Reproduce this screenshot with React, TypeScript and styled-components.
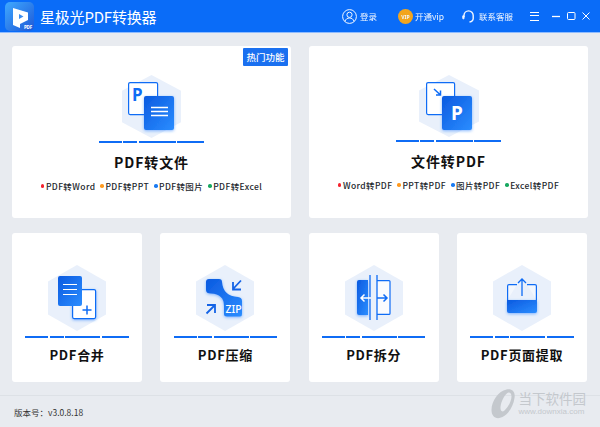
import React from 'react';
import styled, { createGlobalStyle } from 'styled-components';

const GlobalStyle = createGlobalStyle`
  html, body {
    margin: 0;
    padding: 0;
  }
  body {
    font-family: "Noto Sans CJK SC", "Noto Sans", sans-serif;
    background: #e8ebf0;
  }
`;

const HEX = '#e9f0fb';
const BLUE = '#0f6cf5';

const Hexagon = ({ w, h, children }: { w: number; h: number; children: React.ReactNode }) => (
  <svg width={w} height={h} viewBox={`0 0 ${w} ${h}`}>
    <defs>
      <linearGradient id="docFill" x1="0" y1="0" x2="1" y2="1">
        <stop offset="0" stopColor="#0b5ae0" />
        <stop offset="1" stopColor="#2b8dff" />
      </linearGradient>
      <filter id="glow" x="-30%" y="-30%" width="160%" height="160%">
        <feDropShadow dx="0" dy="1" stdDeviation="1.5" floodColor="#2b7fff" floodOpacity="0.55" />
      </filter>
    </defs>
    <polygon points={`${w / 2},0 ${w},${h / 4} ${w},${(h * 3) / 4} ${w / 2},${h} 0,${(h * 3) / 4} 0,${h / 4}`} fill={HEX} />
    {children}
  </svg>
);

const PdfToFileIcon = () => (
  <Hexagon w={59} h={63}>
    <rect x="6.6" y="7.6" width="29" height="32" rx="1.5" fill="#fff" stroke={BLUE} strokeWidth="1.2" />
    <text x="10" y="26" fontSize="17" fontWeight="700" fill={BLUE} fontFamily="Noto Sans">P</text>
    <rect x="22" y="21" width="30" height="34" rx="2" fill="url(#docFill)" filter="url(#glow)" />
    <path d="M29 32.5H46M29 36.5H46M29 40.5H46" stroke="#fff" strokeWidth="1.4" />
  </Hexagon>
);

const FileToPdfIcon = () => (
  <Hexagon w={60} h={62}>
    <rect x="7.6" y="7.6" width="28" height="32" rx="1.5" fill="#fff" stroke={BLUE} strokeWidth="1.2" />
    <path d="M15 14L21.5 20M21.5 15.5V20H17" fill="none" stroke={BLUE} strokeWidth="1.5" />
    <rect x="23" y="21" width="30" height="34" rx="2" fill="url(#docFill)" filter="url(#glow)" />
    <text x="38" y="45" textAnchor="middle" fontSize="19" fontWeight="700" fill="#fff" fontFamily="Noto Sans">P</text>
  </Hexagon>
);

const MergeIcon = () => (
  <Hexagon w={58} h={66}>
    <rect x="24.6" y="24.6" width="23" height="29" rx="1.5" fill="#fff" stroke={BLUE} strokeWidth="1.2" filter="url(#glow)" />
    <rect x="10" y="11" width="24" height="30" rx="2" fill="url(#docFill)" />
    <path d="M15 19.5H29M15 24.5H29M15 29.5H29" stroke="#fff" strokeWidth="1.2" />
    <path d="M39 40.5V49.5M34.5 45H43.5" stroke={BLUE} strokeWidth="1.5" />
  </Hexagon>
);

const CompressIcon = () => (
  <Hexagon w={58} h={66}>
    <path
      d="M13 14H23Q26 14 26 17Q27 31 42 32Q46 32.5 46 36V49Q46 51.5 44 51.5H31Q28 51.5 28 49V41Q28 29 15 28.5Q10 28.5 10 25V17Q10 14 13 14Z"
      fill="url(#docFill)"
      filter="url(#glow)"
    />
    <text x="37.5" y="48" textAnchor="middle" fontSize="10.5" fontWeight="500" fill="#fff" fontFamily="Noto Sans">ZIP</text>
    <path d="M45 15.5L37 24M37 17V24.5H45" fill="none" stroke="#1463e6" strokeWidth="1.8" />
    <path d="M10.5 48.5L18.5 40.5M11 40H19V48" fill="none" stroke="#1463e6" strokeWidth="1.8" />
  </Hexagon>
);

const SplitIcon = () => (
  <Hexagon w={58} h={66}>
    <path d="M14 15H23V50H14Q12 50 12 48V17Q12 15 14 15Z" fill="url(#docFill)" filter="url(#glow)" />
    <path d="M32 15.6H44Q45 15.6 45 16.6V48.4Q45 49.4 44 49.4H32" fill="#fff" fillOpacity="0.75" stroke={BLUE} strokeWidth="1.2" />
    <path d="M25 10V55M32 10V55" stroke={BLUE} strokeWidth="1.3" />
    <path d="M26 33H16M19.5 29.5L16 33L19.5 36.5" fill="none" stroke="#fff" strokeWidth="1.5" />
    <path d="M32 33H42M38.5 29.5L42 33L38.5 36.5" fill="none" stroke={BLUE} strokeWidth="1.5" />
  </Hexagon>
);

const ExtractIcon = () => (
  <Hexagon w={58} h={66}>
    <path d="M14.6 35V21Q14.6 19.6 16 19.6H24M34 19.6H42Q43.4 19.6 43.4 21V35" fill="#fff" fillOpacity="0.45" stroke={BLUE} strokeWidth="1.2" />
    <path d="M14 35H44V46Q44 48 42 48H16Q14 48 14 46Z" fill="url(#docFill)" filter="url(#glow)" />
    <path d="M29 31V14M25 18L29 14L33 18" fill="none" stroke={BLUE} strokeWidth="1.3" />
  </Hexagon>
);

const LogoIcon = () => (
  <svg width="29" height="29" viewBox="0 0 29 29">
    <defs>
      <linearGradient id="logoFill" x1="0" y1="0" x2="1" y2="1">
        <stop offset="0" stopColor="#3fa9ff" />
        <stop offset="1" stopColor="#1d58d8" />
      </linearGradient>
    </defs>
    <rect width="29" height="29" rx="5" fill="url(#logoFill)" />
    <path d="M8 6L23 10.5V18L15 22V26L8 23Z" fill="#fff" />
    <path d="M14 12L18.5 14.5L14 17Z" fill="#3b8df0" />
    <text x="23" y="27" textAnchor="middle" fontSize="4.5" fontWeight="700" fill="#fff" fontFamily="Noto Sans">PDF</text>
  </svg>
);

const UserIcon = () => (
  <svg width="15" height="15" viewBox="0 0 15 15" fill="none" stroke="#fff" strokeWidth="1">
    <circle cx="7.5" cy="7.5" r="6.9" />
    <circle cx="7.5" cy="5.8" r="2.6" />
    <path d="M2.9 12.5C3.6 10 5.4 9 7.5 9S11.4 10 12.1 12.5" />
  </svg>
);

const VipBadge = () => (
  <svg width="15" height="15" viewBox="0 0 15 15">
    <circle cx="7.5" cy="7.5" r="7.5" fill="#ffa913" />
    <text x="7.5" y="9.6" textAnchor="middle" fontSize="5" fontWeight="700" fill="#fff" fontFamily="Noto Sans">VIP</text>
  </svg>
);

const HeadsetIcon = () => (
  <svg width="13" height="14" viewBox="0 0 13 14" fill="none" stroke="#fff" strokeWidth="1.4">
    <path d="M2 8V6.5a4.6 4.6 0 0 1 9.2 0V9.5C11.2 11.5 9.8 12.6 7.5 13" />
    <rect x="0.6" y="6.4" width="1.6" height="3.6" rx="0.8" fill="#fff" strokeWidth="0.6" />
  </svg>
);

const WindowButtons = () => (
  <svg width="38" height="12" viewBox="0 0 38 12" fill="none" stroke="#fff">
    <path d="M0 6.5H8" strokeWidth="1.3" />
    <rect x="15.5" y="2.5" width="7.5" height="7" rx="1" strokeWidth="1" />
    <path d="M30.5 2.5L37.5 9.5M37.5 2.5L30.5 9.5" strokeWidth="1" />
  </svg>
);

const WatermarkLogo = () => (
  <svg width="25" height="30" viewBox="0 0 24 30">
    <path
      d="M15 0.5C21 -0.5 24 3 23 9C22 17 17 25 11 28C5 31 0 28 0 21C0 12 7 2 15 0.5ZM17 3.5C14 4 9.5 12 9 18C8.7 22 10.5 23.5 13 21.5C16.5 18.5 20 12 20 7.5C20 4.5 18.5 3.2 17 3.5Z"
      fill="#c4c8cd"
      fillRule="evenodd"
    />
  </svg>
);

const Header = styled.header`
  height: 33px;
  background: #0a6cf8;
  border-bottom: 1px solid #8fbcff;
  box-sizing: border-box;
  display: flex;
  align-items: center;
  padding: 0 10px 0 5px;
  color: #fff;
`;

const Brand = styled.div`
  display: flex;
  align-items: center;
  gap: 6px;
  font-size: 15px;
  letter-spacing: -0.2px;
  height: 30px;
`;

const HeaderActions = styled.div`
  margin-left: auto;
  display: flex;
  align-items: center;
  font-size: 8.5px;
`;

const HeaderAction = styled.div<{ $gap: number; $right: number }>`
  display: flex;
  align-items: center;
  gap: ${(p) => p.$gap}px;
  margin-right: ${(p) => p.$right}px;
  opacity: 0.95;
`;

const MenuBars = styled.div`
  width: 9px;
  height: 7px;
  border-top: 1px solid #fff;
  border-bottom: 1px solid #fff;
  position: relative;
  margin-right: 13px;
  &::after {
    content: '';
    position: absolute;
    left: 0;
    right: 0;
    top: 2.5px;
    height: 1px;
    background: #fff;
  }
`;

const Main = styled.main`
  padding: 13px 12px 13px;
  display: flex;
  flex-direction: column;
  gap: 15px;
`;

const TopRow = styled.div`
  display: grid;
  grid-template-columns: 279px 279px;
  justify-content: space-between;
`;

const BottomRow = styled.div`
  display: grid;
  grid-template-columns: repeat(4, 130px);
  justify-content: space-between;
  padding-right: 1px;
`;

const Card = styled.section<{ $large?: boolean }>`
  position: relative;
  background: #fff;
  border-radius: 3px;
  height: ${(p) => (p.$large ? 172 : 149)}px;
  box-sizing: border-box;
  padding-top: ${(p) => (p.$large ? 29 : 32)}px;
  display: flex;
  flex-direction: column;
  align-items: center;
  svg {
    display: block;
  }
`;

const HotBadge = styled.div`
  position: absolute;
  top: 2px;
  right: 3px;
  width: 45px;
  height: 18px;
  background: #1a70f0;
  border-radius: 1px;
  color: #fff;
  font-size: 9.5px;
  font-weight: 500;
  line-height: 18px;
  text-align: center;
`;

const Rule = styled.div<{ $large?: boolean }>`
  display: flex;
  gap: 1.5px;
  margin-top: ${(p) => (p.$large ? 3 : 5)}px;
  height: 2px;
`;

const RuleSegment = styled.span<{ $w: number }>`
  width: ${(p) => p.$w}px;
  background: ${BLUE};
`;

const CardTitle = styled.h2<{ $large?: boolean }>`
  margin: ${(p) => (p.$large ? 9 : 7)}px 0 0;
  font-size: ${(p) => (p.$large ? 14 : 13)}px;
  line-height: ${(p) => (p.$large ? 20 : 19)}px;
  font-weight: 700;
  letter-spacing: ${(p) => (p.$large ? 0.9 : 0.7)}px;
  color: #111;
`;

const FormatList = styled.div`
  display: flex;
  gap: 5px;
  margin-top: 7px;
  font-size: 8.5px;
  font-weight: 500;
  line-height: 14px;
  letter-spacing: 0.4px;
  color: #22262c;
`;

const FormatItem = styled.span`
  display: flex;
  align-items: center;
  gap: 1.5px;
  white-space: nowrap;
`;

const Dot = styled.i<{ $color: string }>`
  width: 3.5px;
  height: 3.5px;
  border-radius: 50%;
  background: ${(p) => p.$color};
`;

const Footer = styled.footer`
  border-top: 1px solid #dde1e6;
  height: 32px;
  box-sizing: border-box;
  padding-left: 14px;
  display: flex;
  align-items: center;
  font-size: 8.5px;
  color: #333;
`;

const Watermark = styled.div`
  position: absolute;
  right: 14px;
  top: 389px;
  display: flex;
  align-items: center;
  gap: 3px;
  color: #c4c8cd;
`;

const WatermarkText = styled.div`
  display: flex;
  flex-direction: column;
  font-size: 13.5px;
  line-height: 16px;
  small {
    font-family: "Liberation Sans", sans-serif;
    font-size: 8px;
    line-height: 12px;
  }
`;

const Page = styled.div`
  position: relative;
  width: 600px;
  height: 427px;
  overflow: hidden;
  background: #e8ebf0;
`;

const DOTS = ['#f5222d', '#ff9a1f', '#1a7bf2', '#18a860'];

const large = [
  { title: 'PDF转文件', icon: <PdfToFileIcon />, hot: true, formats: ['PDF转Word', 'PDF转PPT', 'PDF转图片', 'PDF转Excel'] },
  { title: '文件转PDF', icon: <FileToPdfIcon />, hot: false, formats: ['Word转PDF', 'PPT转PDF', '图片转PDF', 'Excel转PDF'] },
];

const small = [
  { title: 'PDF合并', icon: <MergeIcon /> },
  { title: 'PDF压缩', icon: <CompressIcon /> },
  { title: 'PDF拆分', icon: <SplitIcon /> },
  { title: 'PDF页面提取', icon: <ExtractIcon /> },
];

const CardRule = ({ isLarge }: { isLarge?: boolean }) => (
  <Rule $large={isLarge}>
    {(isLarge ? [23, 14, 37, 27] : [23, 14, 35, 27]).map((w, i) => (
      <RuleSegment key={i} $w={w} />
    ))}
  </Rule>
);

export default function App() {
  return (
    <Page>
      <GlobalStyle />
      <Header>
        <Brand>
          <LogoIcon />
          <span>星极光PDF转换器</span>
        </Brand>
        <HeaderActions>
          <HeaderAction $gap={3} $right={21}>
            <UserIcon />
            <span>登录</span>
          </HeaderAction>
          <HeaderAction $gap={2} $right={18}>
            <VipBadge />
            <span>开通vip</span>
          </HeaderAction>
          <HeaderAction $gap={4} $right={17}>
            <HeadsetIcon />
            <span>联系客服</span>
          </HeaderAction>
          <MenuBars />
          <WindowButtons />
        </HeaderActions>
      </Header>
      <Main>
        <TopRow>
          {large.map((card) => (
            <Card key={card.title} $large>
              {card.hot && <HotBadge>热门功能</HotBadge>}
              {card.icon}
              <CardRule isLarge />
              <CardTitle $large>{card.title}</CardTitle>
              <FormatList>
                {card.formats.map((f, i) => (
                  <FormatItem key={f}>
                    <Dot $color={DOTS[i]} />
                    {f}
                  </FormatItem>
                ))}
              </FormatList>
            </Card>
          ))}
        </TopRow>
        <BottomRow>
          {small.map((card) => (
            <Card key={card.title}>
              {card.icon}
              <CardRule />
              <CardTitle>{card.title}</CardTitle>
            </Card>
          ))}
        </BottomRow>
      </Main>
      <Footer>版本号：v3.0.8.18</Footer>
      <Watermark>
        <WatermarkLogo />
        <WatermarkText>
          <span>当下软件园</span>
          <small>www.downxia.com</small>
        </WatermarkText>
      </Watermark>
    </Page>
  );
}
